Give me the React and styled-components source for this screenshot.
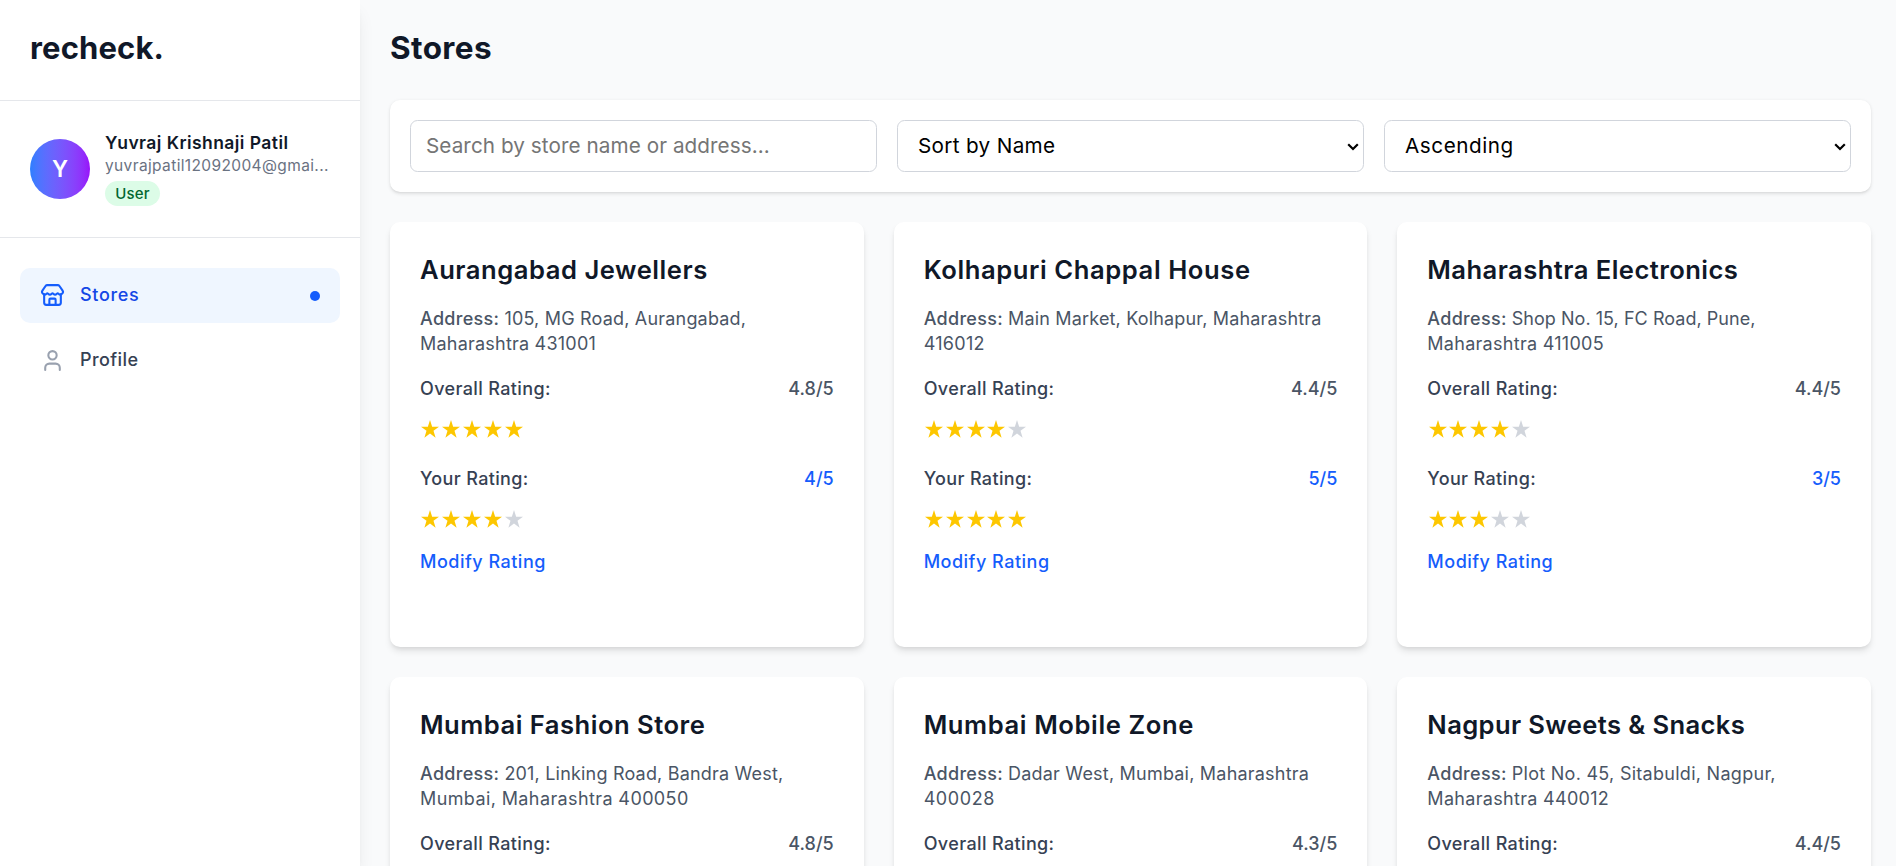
import React from "react";
import styled, { createGlobalStyle } from "styled-components";
import { Store, User } from "lucide-react";

const Global = createGlobalStyle`
  *, *::before, *::after { box-sizing: border-box; margin: 0; padding: 0; }
  html { font-size: 20px; }
  body { font-family: Inter, "Liberation Sans", sans-serif; background: #f9fafb; color: #101828; overflow: hidden; }
`;

const Shell = styled.div`
  display: flex;
  height: 100vh;
  overflow: hidden;
  background: #f9fafb;
`;

const Sidebar = styled.aside`
  flex: none;
  width: 18rem;
  background: #fff;
  box-shadow: 0 12.5px 18.75px -3.75px rgba(0, 0, 0, 0.1), 0 5px 7.5px -5px rgba(0, 0, 0, 0.1);
`;

const BrandBar = styled.div`
  height: 101px;
  padding: 28px 1.5rem 0;
  border-bottom: 1px solid #e5e7eb;
`;

const Tracked = styled.span`
  white-space: nowrap;
  letter-spacing: ${(p) => p.$ls}px;
`;

const Brand = styled.h1`
  font-size: 31px;
  line-height: 2rem;
  font-weight: 700;
  letter-spacing: 0.15px;
`;

const Account = styled.div`
  display: flex;
  align-items: center;
  height: 137px;
  padding: 1.5rem;
  border-bottom: 1px solid #e5e7eb;
`;

const Avatar = styled.div`
  flex: none;
  display: flex;
  align-items: center;
  justify-content: center;
  width: 3rem;
  height: 3rem;
  border-radius: 50%;
  background: linear-gradient(to right in oklab, #2b7fff, #9810fa);
  color: #fff;
  font-size: 22.5px;
  font-weight: 600;
  padding-bottom: 1px;
`;

const AccountText = styled.div`
  margin-left: 0.75rem;
  min-width: 0;
  height: 76px;
`;

const AccountName = styled.p`
  font-size: 17.5px;
  line-height: 23px;
  padding-bottom: 2px;
  font-weight: 600;
  letter-spacing: 0.44px;
  white-space: nowrap;
`;

const AccountEmail = styled.p`
  font-size: 15.5px;
  line-height: 20px;
  letter-spacing: 0.37px;
  color: #6a7282;
  white-space: nowrap;
`;

const RoleBadge = styled.span`
  display: flex;
  align-items: center;
  justify-content: center;
  width: 55px;
  height: 25px;
  margin-top: 5px;
  padding-bottom: 1px;
  border-radius: 13px;
  background: #dcfce7;
  color: #016630;
  font-size: 15px;
  font-weight: 500;
  letter-spacing: 0.2px;
`;

const Nav = styled.nav`
  display: flex;
  flex-direction: column;
  gap: 0.5rem;
  padding: 1.5rem 1rem;
`;

const NavItem = styled.a`
  display: flex;
  align-items: center;
  height: 55px;
  padding: 0 1rem;
  border-radius: 0.5rem;
  font-size: 18px;
  line-height: 25px;
  font-weight: 500;
  background: ${(p) => (p.$active ? "#eff6ff" : "transparent")};
  color: ${(p) => (p.$active ? "#1447e6" : "#364153")};

  svg {
    width: 25px;
    height: 25px;
    margin-right: 15px;
    color: ${(p) => (p.$active ? "#155dfc" : "#99a1af")};
  }
`;

const NavLabel = styled(Tracked)`
  padding-bottom: 2px;
`;

const ActiveDot = styled.span`
  width: 10px;
  height: 10px;
  margin-left: auto;
  border-radius: 50%;
  background: #155dfc;
`;

const Main = styled.main`
  flex: 1;
  min-width: 0;
  padding: 28px 25px 0 30px;
`;

const PageTitle = styled.h2`
  font-size: 31.5px;
  line-height: 40px;
  font-weight: 700;
  letter-spacing: 0.4px;
  margin-bottom: 32px;
`;

const Filters = styled.div`
  display: grid;
  grid-template-columns: repeat(3, 1fr);
  gap: 20px;
  padding: 20px;
  margin-bottom: 30px;
  background: #fff;
  border-radius: 10px;
  box-shadow: 0 1.25px 3.75px rgba(0, 0, 0, 0.1), 0 1.25px 2.5px -1.25px rgba(0, 0, 0, 0.1);
`;

const fieldStyles = `
  width: 100%;
  height: 52px;
  border: 1px solid #d1d5dc;
  border-radius: 7.5px;
  background: #fff;
  font-family: inherit;
  font-size: 20.7px;
  outline: none;
`;

const SearchInput = styled.input`
  ${fieldStyles}
  padding: 0 15px 2px;
  letter-spacing: 0.07px;
  &::placeholder { color: #757575; opacity: 1; }
`;

const SelectBox = styled.div`
  ${fieldStyles}
  display: flex;
  align-items: center;
  justify-content: space-between;
  padding: 0 4px 2px 20px;
  color: #000;
  svg { margin-top: 4px; }
`;

const Cards = styled.div`
  display: grid;
  grid-template-columns: repeat(3, 1fr);
  gap: 30px;
`;

const Card = styled.article`
  height: 425px;
  padding: 30px;
  background: #fff;
  border-radius: 10px;
  box-shadow: 0 5px 7.5px -1.25px rgba(0, 0, 0, 0.1), 0 2.5px 5px -2.5px rgba(0, 0, 0, 0.1);
`;

const CardTitle = styled.h3`
  font-size: 25.6px;
  line-height: 35px;
  font-weight: 600;
  margin-bottom: 19px;
`;

const Address = styled.p`
  font-size: 18px;
  line-height: 25px;
  color: #4a5565;
  margin-bottom: 20px;
  white-space: nowrap;
  b { font-weight: 500; letter-spacing: 0.3px; }
`;

const RatingRow = styled.div`
  display: flex;
  justify-content: space-between;
  font-size: 18px;
  line-height: 25px;
  font-weight: 500;
  color: #364153;
`;

const Score = styled.span`
  color: ${(p) => (p.$own ? "#155dfc" : "#4a5565")};
`;

const Stars = styled.div`
  display: flex;
  gap: 2.85px;
  height: 18px;
  margin: 19px 0 ${(p) => (p.$last ? 21 : 28)}px 1.2px;
`;

const StarShape = styled.svg`
  width: 18px;
  height: 18px;
  fill: ${(p) => (p.$on ? "#fdc700" : "#d1d5dc")};
`;

const ModifyButton = styled.button`
  display: block;
  border: 0;
  background: none;
  font-family: inherit;
  font-size: 18px;
  line-height: 25px;
  font-weight: 500;
  letter-spacing: 0.5px;
  color: #155dfc;
`;

const STORES = [
  { name: "Aurangabad Jewellers", ls: 0.53, lines: [["105, MG Road, Aurangabad,", 0.19], ["Maharashtra 431001", 0.22]], score: "4.8", filled: 5, own: 4 },
  { name: "Kolhapuri Chappal House", ls: 0.58, lines: [["Main Market, Kolhapur, Maharashtra", 0.17], ["416012", 0.3]], score: "4.4", filled: 4, own: 5 },
  { name: "Maharashtra Electronics", ls: 0.44, lines: [["Shop No. 15, FC Road, Pune,", 0.04], ["Maharashtra 411005", 0.28]], score: "4.4", filled: 4, own: 3 },
  { name: "Mumbai Fashion Store", ls: 0.49, lines: [["201, Linking Road, Bandra West,", 0.19], ["Mumbai, Maharashtra 400050", 0.39]], score: "4.8", filled: 5 },
  { name: "Mumbai Mobile Zone", ls: 0.59, lines: [["Dadar West, Mumbai, Maharashtra", 0.21], ["400028", 0.58]], score: "4.3", filled: 4 },
  { name: "Nagpur Sweets & Snacks", ls: 0.37, lines: [["Plot No. 45, Sitabuldi, Nagpur,", 0.28], ["Maharashtra 440012", 0.31]], score: "4.4", filled: 4 },
];

function StarRow({ value, last }) {
  return (
    <Stars $last={last}>
      {[1, 2, 3, 4, 5].map((n) => (
        <StarShape key={n} $on={n <= value} viewBox="0 0 18 18">
          <path d="M9 0 11.15 6.7H18L12.5 10.8 14.6 17.8 9 13.6 3.4 17.8 5.5 10.8 0 6.7H6.85Z" />
        </StarShape>
      ))}
    </Stars>
  );
}

function Chevron() {
  return (
    <svg width="12" height="8" viewBox="0 0 12 8" fill="none" stroke="#000" strokeWidth="2.2">
      <path d="M1.2 1.2 6 6 10.8 1.2" />
    </svg>
  );
}

function StoreCard({ store }) {
  const [first, second] = store.lines;
  return (
    <Card>
      <CardTitle><Tracked $ls={store.ls}>{store.name}</Tracked></CardTitle>
      <Address>
        <b>Address:</b> <Tracked $ls={first[1]}>{first[0]}</Tracked>
        <br />
        <Tracked $ls={second[1]}>{second[0]}</Tracked>
      </Address>
      <RatingRow>
        <Tracked $ls={0.37}>Overall Rating:</Tracked>
        <Score>{store.score}/5</Score>
      </RatingRow>
      <StarRow value={store.filled} />
      {store.own && (
        <>
          <RatingRow>
            <Tracked $ls={0.36}>Your Rating:</Tracked>
            <Score $own>{store.own}/5</Score>
          </RatingRow>
          <StarRow value={store.own} last />
          <ModifyButton>Modify Rating</ModifyButton>
        </>
      )}
    </Card>
  );
}

export default function App() {
  return (
    <>
      <Global />
      <Shell>
        <Sidebar>
          <BrandBar><Brand>recheck.</Brand></BrandBar>
          <Account>
            <Avatar>Y</Avatar>
            <AccountText>
              <AccountName>Yuvraj Krishnaji Patil</AccountName>
              <AccountEmail>yuvrajpatil12092004@gmai...</AccountEmail>
              <RoleBadge>User</RoleBadge>
            </AccountText>
          </Account>
          <Nav>
            <NavItem $active><Store /><NavLabel $ls={0.65}>Stores</NavLabel><ActiveDot /></NavItem>
            <NavItem><User /><NavLabel $ls={0.4}>Profile</NavLabel></NavItem>
          </Nav>
        </Sidebar>
        <Main>
          <PageTitle>Stores</PageTitle>
          <Filters>
            <SearchInput placeholder="Search by store name or address..." />
            <SelectBox><Tracked $ls={0.33}>Sort by Name</Tracked><Chevron /></SelectBox>
            <SelectBox><Tracked $ls={0.55}>Ascending</Tracked><Chevron /></SelectBox>
          </Filters>
          <Cards>
            {STORES.map((s) => <StoreCard key={s.name} store={s} />)}
          </Cards>
        </Main>
      </Shell>
    </>
  );
}
